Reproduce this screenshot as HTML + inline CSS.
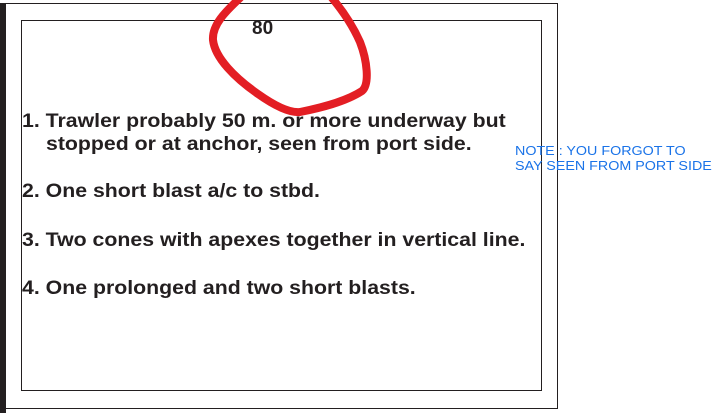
<!DOCTYPE html>
<html><head><style>
html,body{margin:0;padding:0;background:#fff;width:722px;height:413px;overflow:hidden;position:relative;font-family:"Liberation Sans",Arial,sans-serif}
.bar{position:absolute;left:0;top:3px;width:6px;height:410px;background:#231f20}
.outer{position:absolute;left:6px;top:3px;width:551px;height:404px;border:1px solid #231f20;border-left:none}
.inner{position:absolute;left:21px;top:20px;width:519px;height:369px;border:1px solid #231f20}
.t{position:absolute;font-weight:bold;font-size:19px;color:#231f20;white-space:nowrap;transform:scaleX(1.12);transform-origin:0 0}
.n{position:absolute;color:#1a73e8;font-size:13px;white-space:nowrap;line-height:15px;transform:scaleX(1.1);transform-origin:0 0}
</style></head><body>
<div class="bar"></div><div class="outer"></div><div class="inner"></div>
<div class="t" style="left:252px;top:18px;transform:none">80</div>
<div class="t" style="left:22px;top:111px">1. Trawler probably 50 m. or more underway but</div>
<div class="t" style="left:46px;top:134px">stopped or at anchor, seen from port side.</div>
<div class="t" style="left:22px;top:181px">2. One short blast a/c to stbd.</div>
<div class="t" style="left:22px;top:230px">3. Two cones with apexes together in vertical line.</div>
<div class="t" style="left:22px;top:278px">4. One prolonged and two short blasts.</div>
<div class="n" style="left:515px;top:143px">NOTE : YOU FORGOT TO<br>SAY SEEN FROM PORT SIDE</div>
<svg style="position:absolute;left:0;top:0" width="722" height="413"><path d="M240,-2 C225,12 212,25 213,40 C215,58 235,78 258,94 C275,106 290,113 300,112 C320,108 345,102 362,91 C370,84 367,60 360,42 C352,24 342,10 332,-2" fill="none" stroke="#e31e24" stroke-width="8" stroke-linecap="round" stroke-linejoin="round"/></svg>
</body></html>
